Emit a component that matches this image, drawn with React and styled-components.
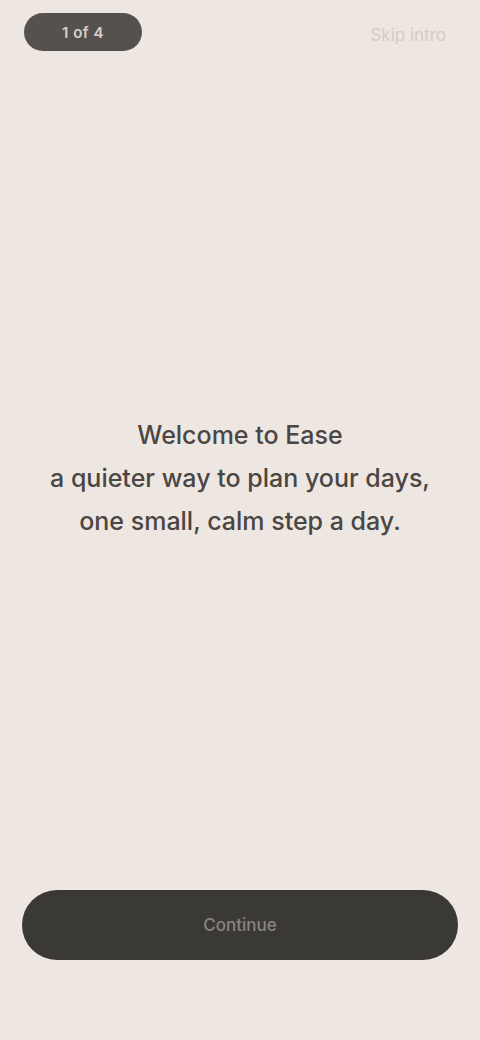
import React from 'react'
import styled, { createGlobalStyle } from 'styled-components'

const Global = createGlobalStyle`
  html, body { margin: 0; padding: 0; background: #eee6e1; }
  * { box-sizing: border-box; }
`

const Page = styled.div`
  min-height: 1040px;
  display: flex;
  flex-direction: column;
  background: #eee6e1;
  font-family: Inter, 'Noto Sans', sans-serif;
  color: #3b3936;
`

const Header = styled.header`
  display: flex;
  align-items: center;
  justify-content: space-between;
  padding: 12px 34px 0 24px;
  height: 52px;
`

const Badge = styled.div`
  width: 118px;
  height: 38px;
  border-radius: 19px;
  background: #55514e;
  color: #d9d1cb;
  display: flex;
  align-items: center;
  justify-content: center;
  font-size: 15px;
  font-weight: 600;
  letter-spacing: 0.5px;
`

const Skip = styled.button`
  border: none;
  background: none;
  font: inherit;
  font-size: 17px;
  color: #d5ccc3;
  padding: 0;
  margin-top: 6px;
`

const Main = styled.main`
  flex: 1;
  display: flex;
  align-items: center;
  justify-content: center;
  padding: 14px 40px 0;
`

const Headline = styled.h1`
  margin: 0;
  text-align: center;
  font-size: 25px;
  line-height: 43px;
  font-weight: 500;
  color: #4a4643;
`

const Footer = styled.footer`
  padding: 0 22px 80px;
`

const Cta = styled.button`
  width: 100%;
  height: 70px;
  border: none;
  border-radius: 35px;
  background: #3b3936;
  color: #8a8480;
  font: inherit;
  font-size: 17px;
  font-weight: 500;
`

export default function App() {
  return (
    <Page>
      <Global />
      <Header>
        <Badge>1 of 4</Badge>
        <Skip>Skip intro</Skip>
      </Header>
      <Main>
        <Headline>
          Welcome to Ease<br />
          a quieter way to plan your days,<br />
          one small, calm step a day.
        </Headline>
      </Main>
      <Footer>
        <Cta>Continue</Cta>
      </Footer>
    </Page>
  )
}
